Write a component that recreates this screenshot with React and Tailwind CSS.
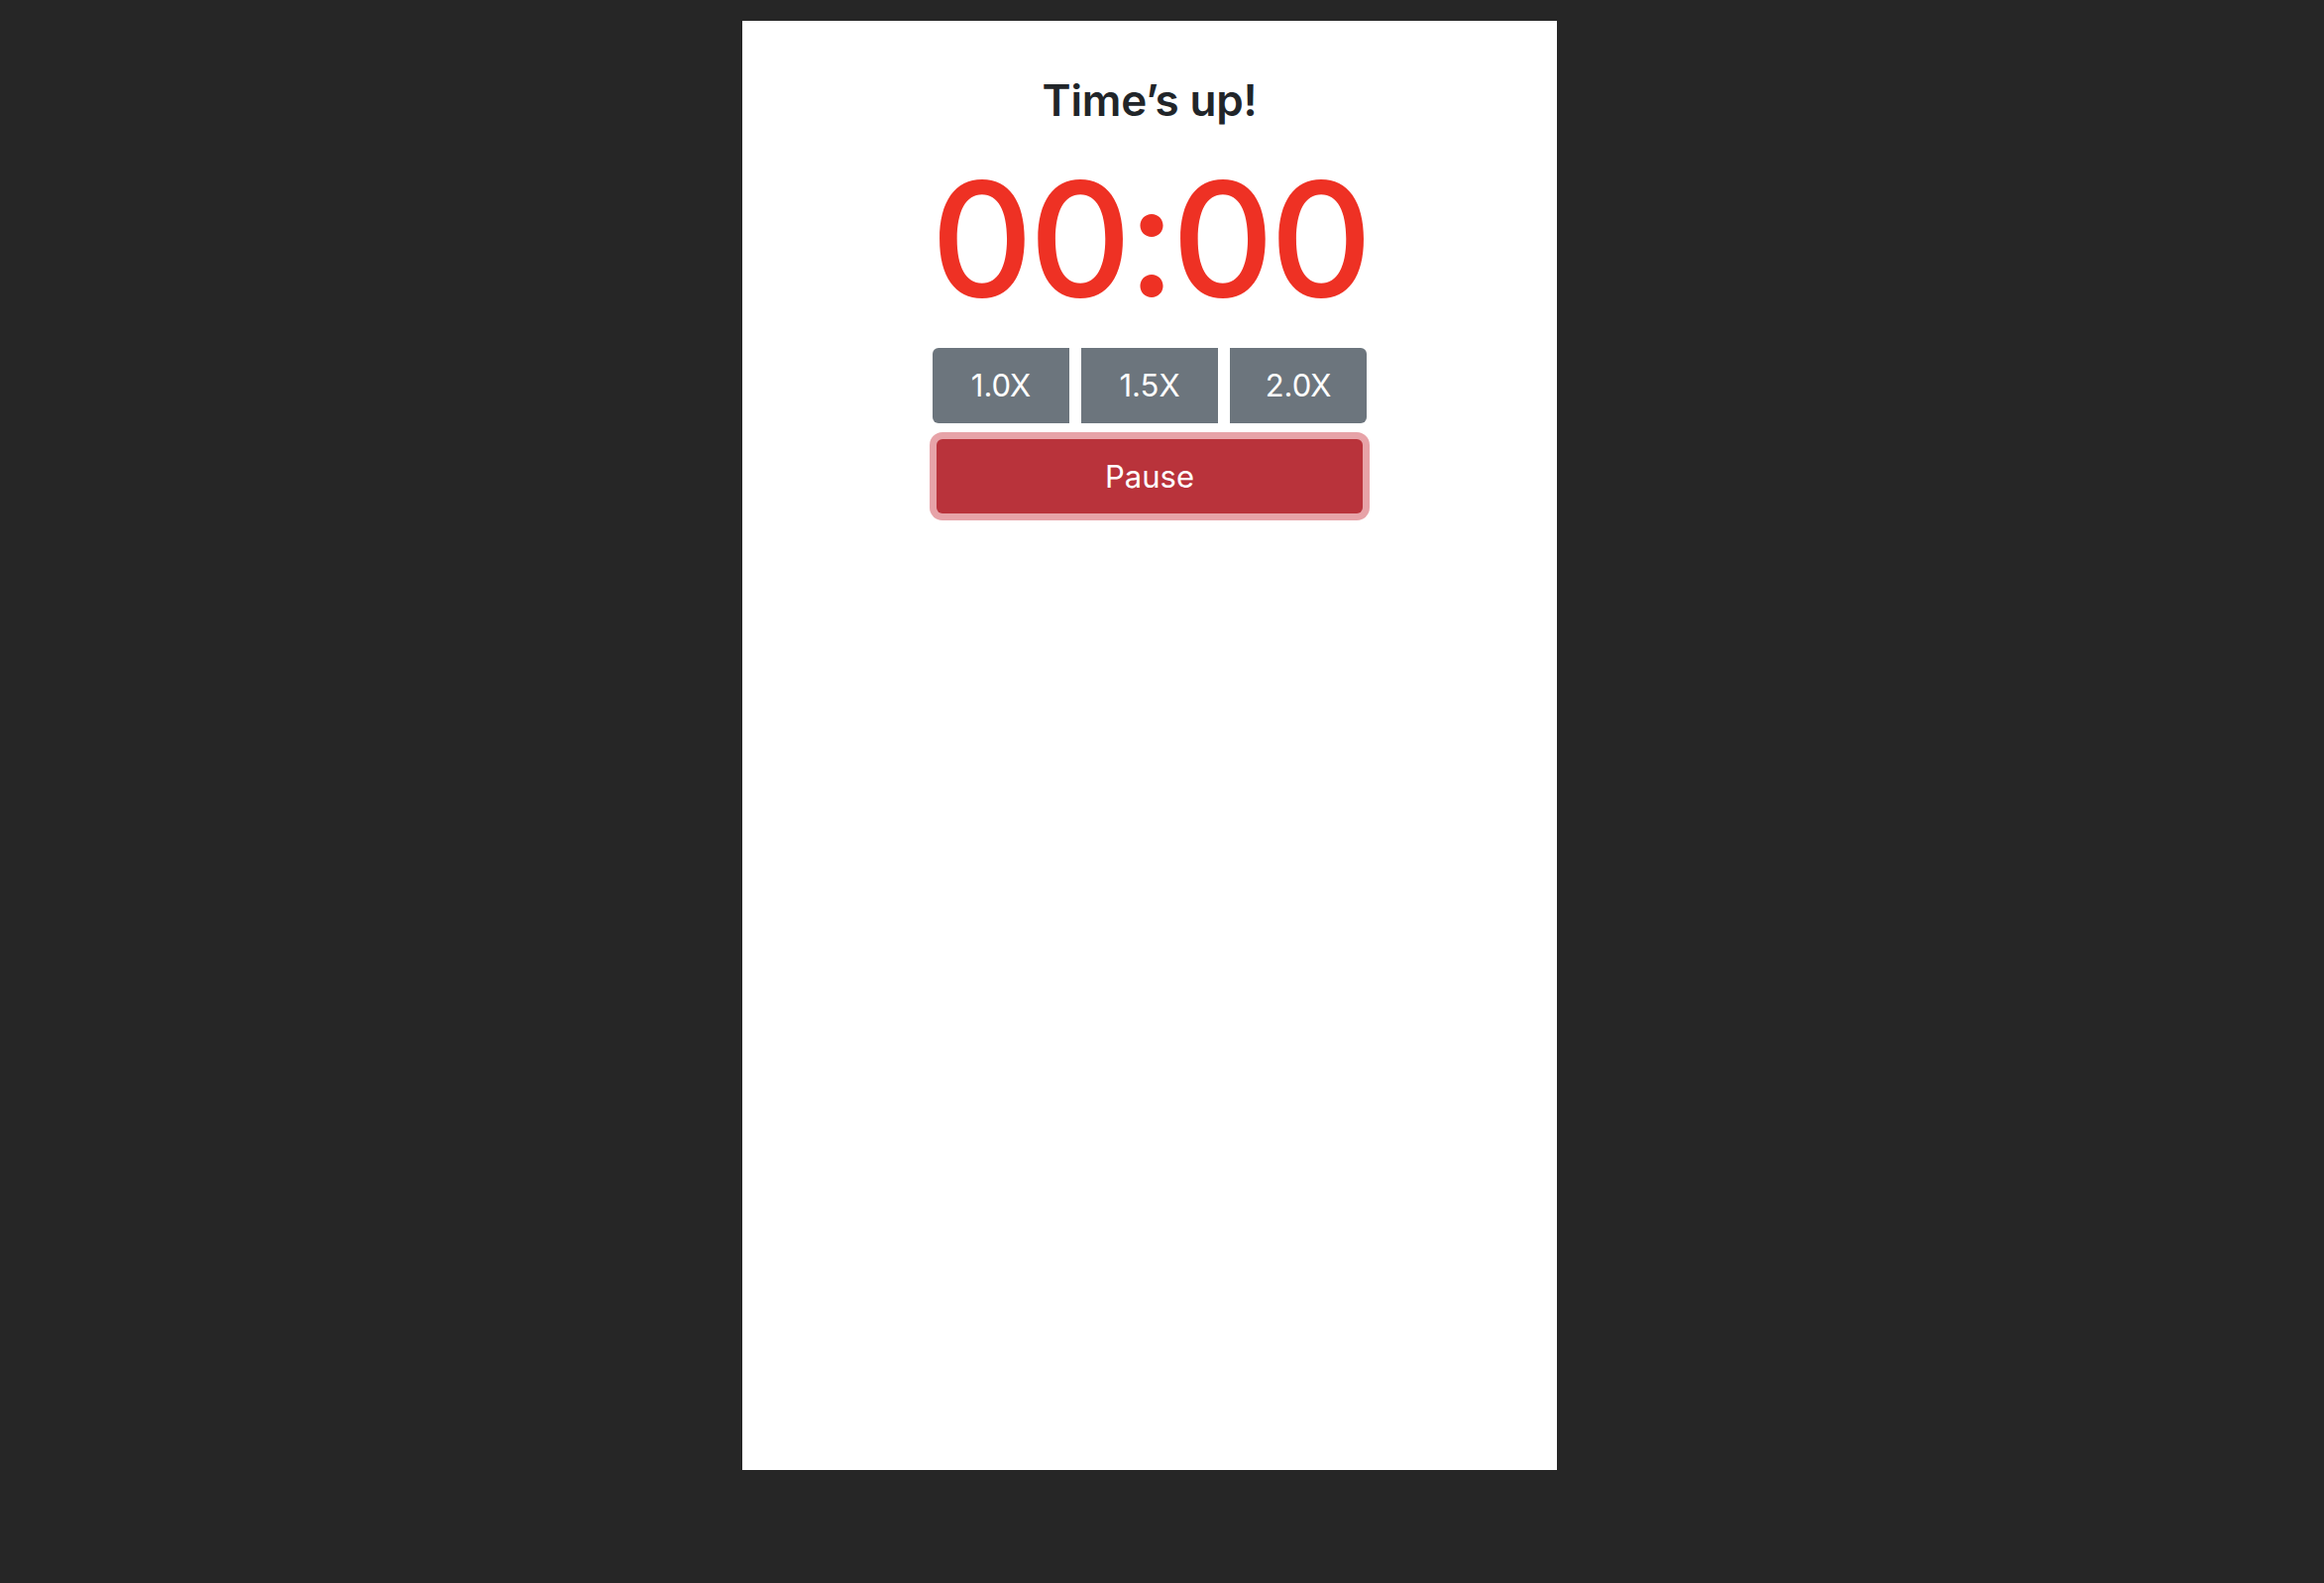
export default function App() {
  const speeds = ['1.0X', '1.5X', '2.0X']

  return (
    <div className="min-h-screen bg-[#262626] pl-[749px] pt-[21px]" style={{ fontFamily: 'Inter, "Noto Sans", sans-serif' }}>
      <div className="w-[822px] h-[1462px] bg-white flex flex-col items-center pt-[58px]">
        <h1 className="text-[44px] leading-none font-semibold text-[#212529] tracking-[-0.2px]">Time’s up!</h1>

        <div className="mt-[38px] text-[160px] leading-none font-medium text-[#ee3124] tracking-[-4px]">00:00</div>

        <div className="mt-[30px] flex gap-[12px]">
          {speeds.map((s, i) => (
            <button
              key={s}
              className={
                'w-[138px] h-[76px] bg-[#6c757d] text-white text-[31px] flex items-center justify-center ' +
                (i === 0 ? 'rounded-l-[6px]' : i === 2 ? 'rounded-r-[6px]' : '')
              }>
              {s}
            </button>
          ))}
        </div>

        <button className="mt-[16px] w-[430px] h-[75px] rounded-[6px] bg-[#b9333b] text-white text-[31px] pt-[2px] flex items-center justify-center shadow-[0_0_0_7px_#e7a3a8]">
          Pause
        </button>
      </div>
    </div>
  )
}
